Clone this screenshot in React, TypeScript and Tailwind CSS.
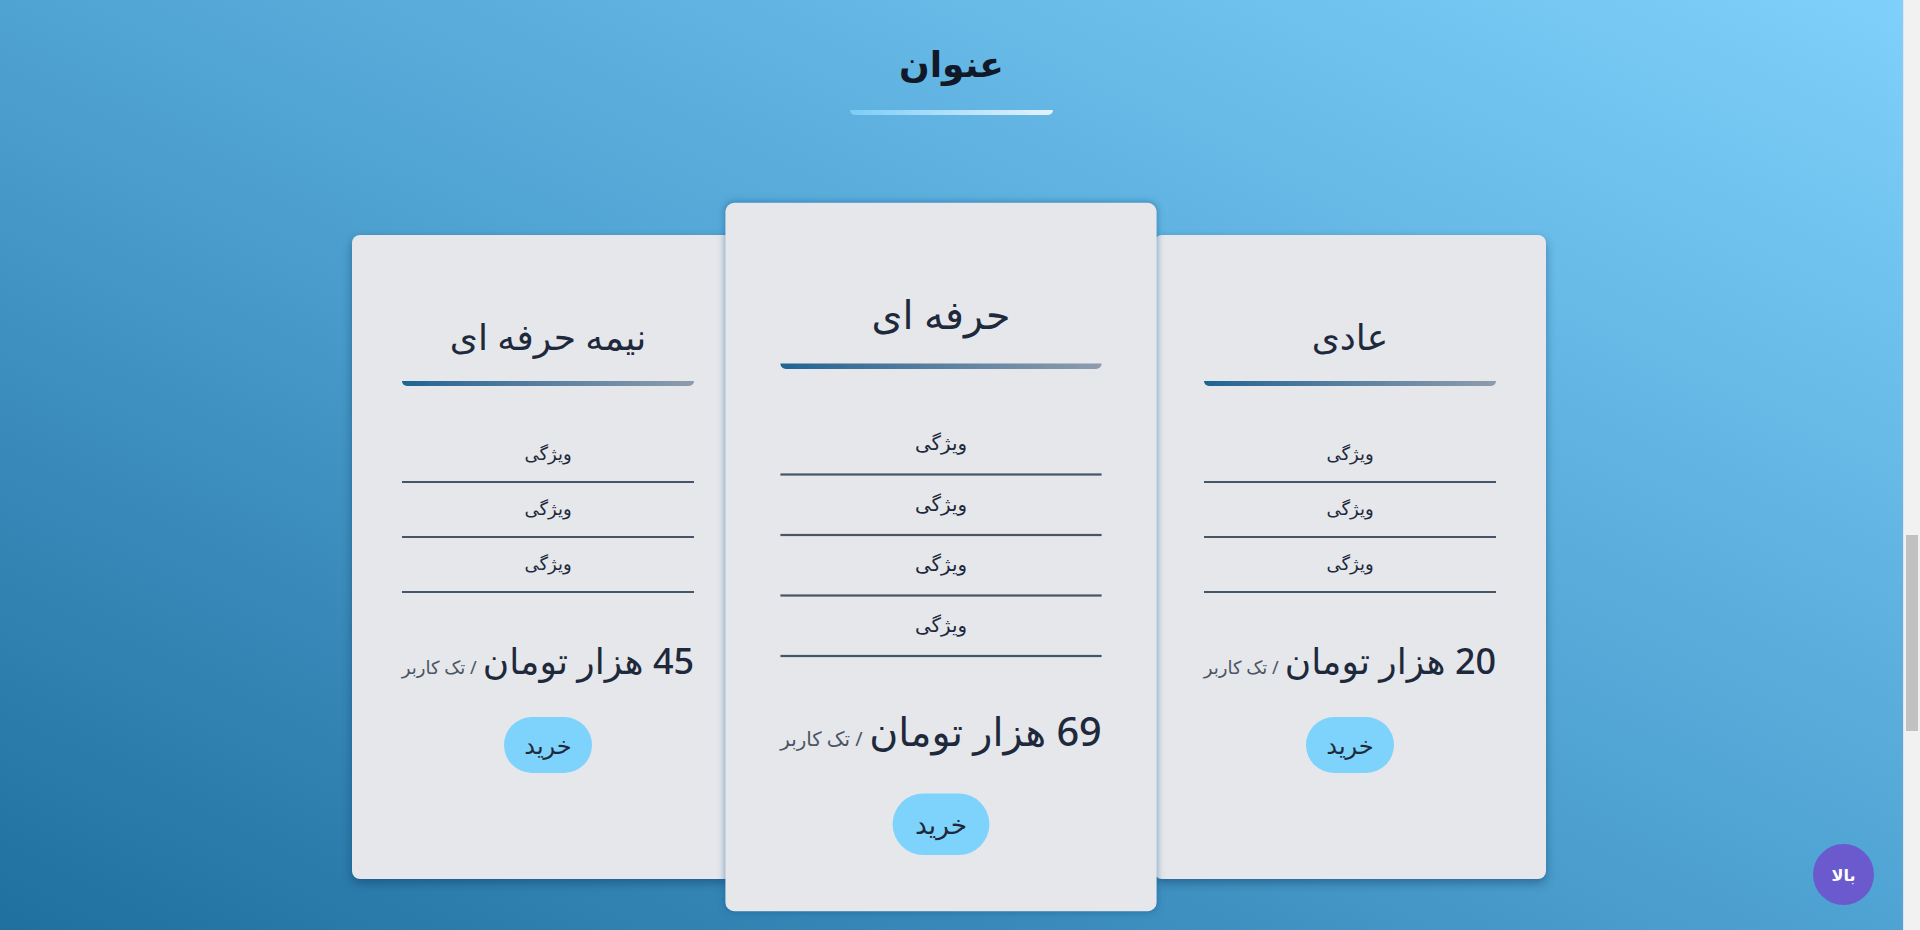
import React from "react";

type Plan = {
  title: string;
  price: string;
  features: string[];
  featured?: boolean;
};

const plans: Plan[] = [
  { title: "عادی", price: "20", features: ["ویژگی", "ویژگی", "ویژگی"] },
  { title: "حرفه ای", price: "69", features: ["ویژگی", "ویژگی", "ویژگی", "ویژگی"], featured: true },
  { title: "نیمه حرفه ای", price: "45", features: ["ویژگی", "ویژگی", "ویژگی"] },
];

function PlanCard({ plan }: { plan: Plan }) {
  return (
    <div
      className={
        "w-[392px] rounded-lg bg-[#e5e7eb] px-[50px] pt-[82px] pb-[51px] flex flex-col items-stretch " +
        (plan.featured
          ? "relative z-10 scale-110 -translate-x-2 shadow-[0_0_7px_rgba(20,90,150,0.55)]"
          : "shadow-[0_4px_10px_rgba(10,50,90,0.45)]")
      }
    >
      <h3 className="text-center text-4xl leading-10 text-[#1e293b]">{plan.title}</h3>
      <div className="mt-[24px] h-[5px] rounded-b-md bg-linear-to-r from-[#1d6494] to-[#8d9cac]" />

      <ul className="mt-[42px]">
        {plan.features.map((f, i) => (
          <li
            key={i}
            className="h-[55px] flex items-center justify-center border-b-2 border-[#475569] pb-1 text-lg text-[#1e293b]"
          >
            {f}
          </li>
        ))}
      </ul>

      <div className="mt-[48px] flex items-baseline justify-center whitespace-nowrap text-[#1e293b]">
        <span className="text-4xl leading-10 font-medium">{plan.price} هزار تومان</span>
        <span className="ms-1.5 text-lg text-[#4b5563]">/ تک کاربر</span>
      </div>

      <div className="mt-9 flex justify-center">
        <button className="rounded-full bg-[#7dd3fc] px-5 py-3 text-2xl leading-8 text-[#1e293b]">
          خرید
        </button>
      </div>
    </div>
  );
}

export default function App() {
  return (
    <div className="flex h-screen overflow-hidden font-['Noto_Sans','DejaVu_Sans',sans-serif]">
      <main className="flex-1 overflow-hidden">
        <section
          dir="rtl"
          className="min-h-[930px] bg-linear-to-tr from-[#1f6f9f] via-[#4fa3d2] to-[#7fd1fb] pt-11 pb-10"
        >
          <div className="flex flex-col items-center">
            <h2 className="text-4xl leading-10 font-bold text-[#111827]">عنوان</h2>
            <div className="mt-[26px] h-[5px] w-[203px] rounded-b-md bg-linear-to-l from-[#e3f3fc] to-[#7ccdf6]" />
          </div>

          <div className="mt-[120px] flex justify-center items-stretch gap-[9px] pr-[5px]">
            {plans.map((p) => (
              <PlanCard key={p.title} plan={p} />
            ))}
          </div>
        </section>
      </main>

      {/* scrollbar */}
      <aside className="w-[17px] bg-[#f1f1f1] border-l border-[#e5e5e5]">
        <div className="mx-[2px] mt-[535px] h-[196px] bg-[#c1c1c1]" />
      </aside>

      <button
        dir="rtl"
        className="fixed bottom-[25px] right-[46px] h-[61px] w-[61px] rounded-full bg-[#6a5acd] text-base font-bold text-white"
      >
        بالا
      </button>
    </div>
  );
}
